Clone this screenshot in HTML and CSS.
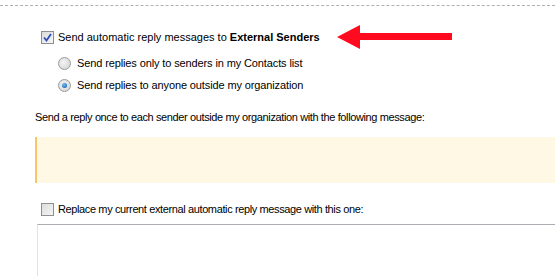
FILE: index.html
```html
<!DOCTYPE html>
<html>
<head>
<meta charset="utf-8">
<link rel="stylesheet" href="styles.css">
</head>
<body>
<div class="rule"></div>
<div class="row main">
  <span class="check checked"><svg viewBox="0 0 9 9" width="9" height="9"><path d="M1 4.5 L3.5 7.5 L8 1" fill="none" stroke="#2a4fb8" stroke-width="1.8"/></svg></span>
  <span class="label">Send automatic reply messages to <b>External Senders</b></span>
  <svg class="arrow" viewBox="0 0 118 26" width="118" height="26"><polygon points="1,13 24,1 24,9 116,9 116,16 24,16 24,25" fill="#ff0a1e"/></svg>
</div>
<div class="radios">
  <div class="row"><span class="radio"></span><span class="label">Send replies only to senders in my Contacts list</span></div>
  <div class="row"><span class="radio on"></span><span class="label">Send replies to anyone outside my organization</span></div>
</div>
<p class="intro">Send a reply once to each sender outside my organization with the following message:</p>
<div class="note"></div>
<div class="row replace">
  <span class="check"></span>
  <span class="label">Replace my current external automatic reply message with this one:</span>
</div>
<div class="textbox"></div>
</body>
</html>
```
FILE: styles.css
```css
html, body {
  margin: 0;
  padding: 0;
  background: #fff;
  overflow: hidden;
}
body {
  font-family: "Liberation Sans", Arial, sans-serif;
  font-size: 11px;
  color: #000;
  width: 555px;
  height: 276px;
}
.rule {
  margin-top: 5px;
  border-top: 1px dashed #b0b0b0;
}
.row {
  display: flex;
  align-items: center;
  height: 13px;
  line-height: 13px;
}
.main {
  position: relative;
  margin-top: 25px;
  padding-left: 41px;
  gap: 4px;
}
.arrow {
  position: absolute;
  left: 336px;
  top: -7px;
}
.check {
  width: 11px;
  height: 11px;
  border: 1px solid #8e8f8f;
  background: linear-gradient(135deg, #dcdcdc, #f6f6f6);
  display: flex;
  align-items: center;
  justify-content: center;
  flex: none;
}
.radios {
  margin-top: 13px;
  padding-left: 58px;
  display: flex;
  flex-direction: column;
  gap: 9px;
}
.radios .row {
  gap: 6px;
  letter-spacing: -0.12px;
}
.radio {
  width: 11px;
  height: 11px;
  border: 1px solid #9a9a9a;
  border-radius: 50%;
  background: radial-gradient(circle at 40% 40%, #f4f4f4, #d0d0d0);
  flex: none;
  display: flex;
  align-items: center;
  justify-content: center;
}
.radio.on::after {
  content: "";
  width: 5px;
  height: 5px;
  border-radius: 50%;
  background: radial-gradient(circle at 40% 35%, #6fc0ff, #0b4d8f);
}
.intro {
  margin: 19px 0 0 0;
  padding-left: 35px;
  height: 13px;
  line-height: 13px;
  letter-spacing: -0.38px;
}
.note {
  margin-top: 13px;
  margin-left: 35px;
  height: 46px;
  background: #fff8e4;
  border-left: 2px solid #f8c56c;
}
.replace {
  margin-top: 20px;
  padding-left: 41px;
  gap: 4px;
  letter-spacing: -0.38px;
}
.textbox {
  margin-top: 8px;
  margin-left: 37px;
  height: 51px;
  border-top: 1px solid #abadb3;
  border-left: 1px solid #e2e3ea;
}
```
